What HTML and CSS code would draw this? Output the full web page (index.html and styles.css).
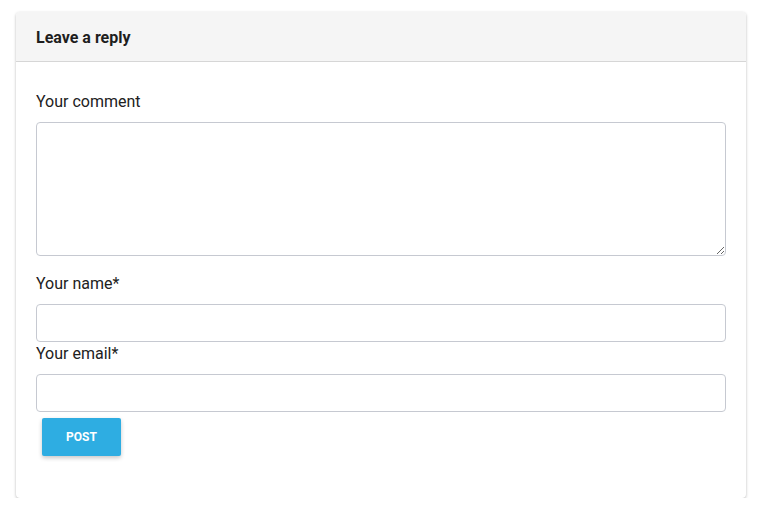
FILE: index.html
```html
<!DOCTYPE html>
<html>
<head>
<meta charset="utf-8">
<link rel="stylesheet" href="styles.css">
</head>
<body>
<div class="card">
  <div class="card-header">Leave a reply</div>
  <form class="card-body">
    <label class="lbl">Your comment</label>
    <textarea class="field area"></textarea>
    <label class="lbl lbl-name">Your name*</label>
    <input class="field" type="text">
    <label class="lbl lbl-email">Your email*</label>
    <input class="field" type="text">
    <button type="button" class="btn">POST</button>
  </form>
</div>
</body>
</html>
```
FILE: styles.css
```css
html, body {
  margin: 0;
  padding: 0;
  background: #ffffff;
}
body {
  font-family: Roboto, "Liberation Sans", sans-serif;
  color: #212121;
  padding: 12px 18px 0 16px;
}
.card {
  width: 730px;
  background: #fff;
  border-radius: 4px;
  box-shadow: 0 1px 3px rgba(0,0,0,0.28);
  overflow: hidden;
}
.card-header {
  height: 50px;
  box-sizing: border-box;
  padding: 1px 20px 0;
  display: flex;
  align-items: center;
  background: #f5f5f5;
  border-bottom: 1px solid #d6d6d6;
  font-weight: 700;
  font-size: 16px;
  color: #1e1e1e;
}
.card-body {
  display: flex;
  flex-direction: column;
  align-items: flex-start;
  padding: 30px 20px 42px;
  margin: 0;
}
.lbl {
  display: block;
  font-size: 16px;
  line-height: 19px;
  margin-bottom: 11px;
  color: #212121;
}
.lbl-name { margin-top: 18px; }
.lbl-email { margin-top: 2px; }
.field {
  display: block;
  width: 690px;
  height: 38px;
  box-sizing: border-box;
  border: 1px solid #c6c9d1;
  border-radius: 4px;
  background: #fff;
  margin: 0;
  font: inherit;
}
.area {
  height: 134px;
  resize: vertical;
}
.btn {
  margin: 6px 0 0 6px;
  width: 79px;
  height: 38px;
  border: 0;
  border-radius: 2px;
  background: #2eade2;
  color: #fff;
  font-family: Roboto, "Liberation Sans", sans-serif;
  font-size: 12px;
  font-weight: 700;
  box-shadow: 0 2px 4px rgba(0,0,0,0.22);
  padding: 0;
}
```
